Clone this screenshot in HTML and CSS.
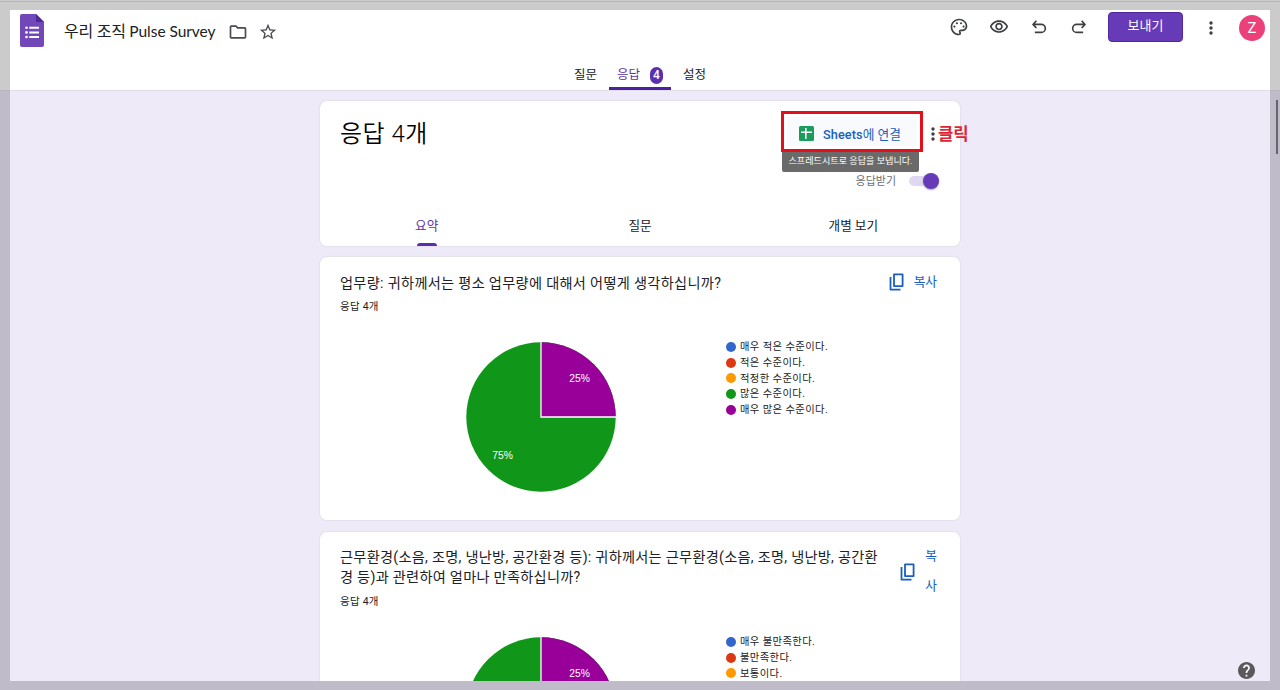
FILE: index.html
```html
<!DOCTYPE html>
<html lang="ko">
<head>
<meta charset="utf-8">
<title>우리 조직 Pulse Survey</title>
<link rel="stylesheet" href="styles.css">
</head>
<body>
<div class="frame">
<div class="app">
  <header class="topbar">
    <div class="toolbar">
      <svg class="logo" width="24" height="33" viewBox="0 0 24 33"><path d="M2 0h14l8 8v23a2 2 0 0 1-2 2H2a2 2 0 0 1-2-2V2a2 2 0 0 1 2-2z" fill="#7248b9"/><path d="M16 0l8 8h-8z" fill="#4d2a93"/><g fill="#fff"><circle cx="6.5" cy="13.8" r="1.3"/><circle cx="6.5" cy="18.4" r="1.3"/><circle cx="6.5" cy="23" r="1.3"/><path d="M9.3 12.8H19v2H9.3zM9.3 17.4H19v2H9.3zM9.3 22H19v2H9.3z"/></g></svg>
      <h1 class="doc-title">우리 조직 <span class="latin">Pulse Survey</span></h1>
      <svg class="folder" width="20" height="20" viewBox="0 0 24 24"><path fill="#484b4f" d="M9.17 6l2 2H20v10H4V6h5.17M10 4H4c-1.1 0-1.99.9-1.99 2L2 18c0 1.1.9 2 2 2h16c1.1 0 2-.9 2-2V8c0-1.1-.9-2-2-2h-8l-2-2z"/></svg>
      <svg class="star" width="18" height="18" viewBox="1 1 22 22"><path fill="#484b4f" d="M22 9.24l-7.19-.62L12 2 9.19 8.63 2 9.24l5.46 4.73L5.82 21 12 17.27 18.18 21l-1.63-7.03L22 9.24zM12 15.4l-3.76 2.27 1-4.28-3.32-2.88 4.38-.38L12 6.1l1.71 4.04 4.38.38-3.32 2.88 1 4.28L12 15.4z"/></svg>
      <div class="actions">
        <svg width="20" height="20" viewBox="0 0 24 24"><path fill="#3c4043" d="M12 22C6.49 22 2 17.51 2 12S6.49 2 12 2s10 4.04 10 9c0 3.31-2.69 6-6 6h-1.77c-.28 0-.5.22-.5.5 0 .12.05.23.13.33.41.47.64 1.06.64 1.67A2.5 2.5 0 0 1 12 22zm0-18c-4.41 0-8 3.59-8 8s3.59 8 8 8c.28 0 .5-.22.5-.5a.54.54 0 0 0-.14-.35c-.41-.46-.63-1.05-.63-1.65a2.5 2.5 0 0 1 2.5-2.5H16c2.21 0 4-1.79 4-4 0-3.86-3.59-7-8-7z"/><g fill="#3c4043"><circle cx="6.5" cy="11.5" r="1.3"/><circle cx="9.5" cy="7.5" r="1.3"/><circle cx="14.5" cy="7.5" r="1.3"/><circle cx="17.5" cy="11.5" r="1.3"/></g></svg>
        <svg width="20" height="20" viewBox="0 0 24 24"><path fill="#3c4043" d="M12 6c3.79 0 7.17 2.13 8.82 5.5C19.17 14.87 15.79 17 12 17s-7.17-2.13-8.82-5.5C4.83 8.13 8.21 6 12 6m0-2C7 4 2.73 7.11 1 11.5 2.73 15.89 7 19 12 19s9.27-3.11 11-7.5C21.27 7.11 17 4 12 4zm0 5a2.5 2.5 0 0 1 0 5 2.5 2.5 0 0 1 0-5m0-2c-2.48 0-4.5 2.02-4.5 4.5S9.52 16 12 16s4.5-2.02 4.5-4.5S14.48 7 12 7z"/></svg>
        <svg width="20" height="20" viewBox="0 0 24 24"><path fill="none" stroke="#3c4043" stroke-width="2" d="M8.8 4.5L4.9 8.9l3.9 4.3M5.3 8.9h9.5a4.8 4.8 0 0 1 0 9.6H7"/></svg>
        <svg width="20" height="20" viewBox="0 0 24 24"><path fill="none" stroke="#3c4043" stroke-width="2" d="M15.2 4.5l3.9 4.4-3.9 4.3M18.7 8.9H9.2a4.8 4.8 0 0 0 0 9.6H17"/></svg>
        <button class="send">보내기</button>
        <svg class="more" width="6" height="16" viewBox="0 0 6 16"><g fill="#3c4043"><circle cx="3" cy="3" r="1.7"/><circle cx="3" cy="8" r="1.7"/><circle cx="3" cy="13" r="1.7"/></g></svg>
        <div class="avatar">Z</div>
      </div>
    </div>
    <nav class="tabs">
      <div class="tab">질문</div>
      <div class="tab active">응답 <span class="count">4</span></div>
      <div class="tab">설정</div>
    </nav>
  </header>

  <main class="content">
    <section class="card summary">
      <div class="summary-head">
        <h2>응답 4개</h2>
        <div class="sheets">
          <div class="sheets-link"><svg width="15" height="15" viewBox="0 0 15 15"><rect width="15" height="15" rx="1.5" fill="#1a9c5b"/><path d="M6.8 2v11M2 6.3h11" stroke="#fff" stroke-width="1.6"/></svg><span><b>Sheets</b>에 연결</span></div>
          <div class="tooltip">스프레드시트로 응답을 보냅니다.</div>
        </div>
        <svg class="card-more" width="6" height="16" viewBox="0 0 6 16"><g fill="#3c4043"><circle cx="3" cy="3" r="1.7"/><circle cx="3" cy="8" r="1.7"/><circle cx="3" cy="13" r="1.7"/></g></svg>
        <div class="note">클릭</div>
      </div>
      <div class="accept"><span>응답받기</span><div class="switch"><i></i></div></div>
      <div class="views"><div class="view on">요약</div><div class="view">질문</div><div class="view">개별 보기</div></div>
    </section>

    <section class="card question">
      <div class="q-head">
        <div class="q-text"><h3>업무량: 귀하께서는 평소 업무량에 대해서 어떻게 생각하십니까?</h3><p>응답 4개</p></div>
        <div class="copy"><svg width="16" height="18" viewBox="0 0 16 18"><path fill="none" stroke="#1a5fc0" stroke-width="1.8" stroke-linejoin="round" d="M5 1.4h8.6v11.7H5zM1.5 4v12.6h10"/></svg><span>복사</span></div>
      </div>
      <div class="chart">
        <svg class="pie" width="150" height="150" viewBox="0 0 150 150"><circle cx="75" cy="75" r="74.7" fill="#109618"/><path d="M75 75V.3A74.7 74.7 0 0 1 149.7 75z" fill="#990099"/><path d="M75 0v75h75" fill="none" stroke="#fff" stroke-width="1.3"/><text x="113.5" y="39.5">25%</text><text x="36.5" y="116.5">75%</text></svg>
        <ul class="legend"><li class="c1">매우 적은 수준이다.</li><li class="c2">적은 수준이다.</li><li class="c3">적정한 수준이다.</li><li class="c4">많은 수준이다.</li><li class="c5">매우 많은 수준이다.</li></ul>
      </div>
    </section>

    <section class="card question second">
      <div class="q-head">
        <div class="q-text"><h3>근무환경(소음, 조명, 냉난방, 공간환경 등): 귀하께서는 근무환경(소음, 조명, 냉난방, 공간환<br>경 등)과 관련하여 얼마나 만족하십니까?</h3><p>응답 4개</p></div>
        <div class="copy tall"><svg width="16" height="18" viewBox="0 0 16 18"><path fill="none" stroke="#1a5fc0" stroke-width="1.8" stroke-linejoin="round" d="M5 1.4h8.6v11.7H5zM1.5 4v12.6h10"/></svg><span>복<br>사</span></div>
      </div>
      <div class="chart">
        <svg class="pie" width="150" height="150" viewBox="0 0 150 150"><circle cx="75" cy="75" r="74.7" fill="#109618"/><path d="M75 75V.3A74.7 74.7 0 0 1 149.7 75z" fill="#990099"/><path d="M75 0v75h75" fill="none" stroke="#fff" stroke-width="1.3"/><text x="113.5" y="39.5">25%</text></svg>
        <ul class="legend"><li class="c1">매우 불만족한다.</li><li class="c2">불만족한다.</li><li class="c3">보통이다.</li></ul>
      </div>
    </section>
  </main>
  <div class="help"><svg width="17" height="17" viewBox="2 2 20 20"><path fill="#5a5a5c" d="M12 2C6.48 2 2 6.48 2 12s4.48 10 10 10 10-4.48 10-10S17.52 2 12 2z"/><path fill="#fff" d="M13 19h-2v-2h2v2zm2.07-7.75l-.9.92C13.45 12.9 13 13.5 13 15h-2v-.5c0-1.1.45-2.1 1.17-2.83l1.24-1.26c.37-.36.59-.86.59-1.41 0-1.1-.9-2-2-2s-2 .9-2 2H8c0-2.21 1.79-4 4-4s4 1.79 4 4c0 .88-.36 1.68-.93 2.25z"/></svg></div>
</div>
<div class="scrollbar"></div>
</div>
</body>
</html>
```
FILE: styles.css
```css
* { box-sizing: border-box; }
body, h1, h2, h3, p, ul { margin: 0; padding: 0; font-weight: 400; }
body { font-family: Roboto, "Noto Sans CJK KR", sans-serif; color: #202124; overflow: hidden; }
svg { display: block; flex: none; }
.frame { position: relative; width: 1280px; height: 690px; padding: 10px 10px 9px; background: linear-gradient(#cbcbcb 0 1px, #b5b5b5 1px 2px, #cbcbcb 2px 90px, #b8b6bc 90px 91px, #bfbbc8 91px); }
.app { position: relative; height: 671px; overflow: hidden; background: #eeeaf7; }

.topbar { height: 81px; background: #fff; border-bottom: 1px solid #e0dde6; }
.toolbar { display: flex; height: 45px; padding-left: 10px; align-items: flex-start; }
.logo { margin-top: 4px; }
.doc-title { margin-left: 20px; padding-top: 9px; width: 155px; font-size: 16px; line-height: 24px; white-space: nowrap; letter-spacing: -.25px; }
.latin { font-family: Lato, sans-serif; font-size: 15.5px; letter-spacing: -.05px; }
.folder { margin: 12px 0 0 9px; }
.star { margin: 13px 0 0 11px; }
.actions { display: flex; align-items: center; gap: 20px; height: 34px; margin-left: auto; padding-right: 5px; }
.send { width: 75px; height: 30px; margin: 0 5px 0 -1px; border: 1px solid #53289f; border-radius: 4px; padding: 0 0 2px; background: #673ab7; color: #fff; font: 13px/20px Roboto, "Noto Sans CJK KR", sans-serif; }
.more { margin: 1px 6px 0 0; }
.avatar { width: 26px; height: 26px; margin: 1px 0 0 -1px; border-radius: 50%; background: #ec407a; color: #fff; font-size: 15px; line-height: 27px; text-align: center; }
.tabs { display: flex; justify-content: center; height: 35px; }
.tab { padding: 8px 12px 0; font-size: 12.5px; line-height: 24px; white-space: nowrap; height: 35px; }
.tab.active { display: flex; gap: 10px; width: 62px; padding: 8px 8px 0; color: #5b34a5; background: linear-gradient(#4d1fa3, #4d1fa3) 0 100% / 100% 3px no-repeat; border-radius: 3px 3px 0 0; }
.count { flex: none; width: 13px; height: 17px; margin-top: 4px; border-radius: 7px; background: #5b30ae; color: #fff; font-size: 12px; font-weight: 500; line-height: 17px; text-align: center; }

.content { width: 640px; margin: 10px auto 0; }
.card { background: #fff; border-radius: 7px; box-shadow: 0 0 1px 1px #e4e0ed; }
.summary { height: 145px; padding-top: 10px; }
.summary-head { position: relative; display: flex; align-items: flex-start; height: 59px; padding-left: 20px; }
.summary h2 { width: 441px; padding-top: 5px; font-size: 24px; line-height: 36px; font-weight: 350; letter-spacing: .5px; color: #000; }
.sheets { width: 142px; }
.sheets-link { display: flex; align-items: center; gap: 9px; height: 41px; padding: 4px 0 0 15px; border: 3px solid #e3101c; background: #f8fafe; box-shadow: inset 0 0 0 3px #fff; color: #1860bb; font-size: 12.7px; white-space: nowrap; }
.sheets-link b { font-weight: 500; letter-spacing: .1px; }
.tooltip { width: 137px; height: 20px; margin-left: 1px; background: #6a6a6a; color: #fff; border-radius: 0 0 2px 2px; font-size: 9.1px; line-height: 19px; text-align: center; white-space: nowrap; }
.card-more { margin: 15px 0 0 7px; }
.note { margin: 12px -20px 0 2px; color: #dc2436; font-size: 16.7px; font-weight: 700; line-height: 24px; white-space: nowrap; }
.accept { display: flex; justify-content: flex-end; align-items: center; gap: 13px; height: 22px; padding-right: 21px; color: #6b6e72; font-size: 11px; }
.accept span { margin-top: -2px; }
.switch { width: 30px; height: 10px; border-radius: 5px; background: #e0d8f1; display: flex; align-items: center; justify-content: flex-end; }
.switch i { width: 16px; height: 16px; border-radius: 50%; background: #673ab7; box-shadow: 0 1px 2px #aaa; }
.views { display: grid; grid-template-columns: repeat(3, 1fr); height: 54px; }
.view { padding-top: 22px; font-size: 12.6px; line-height: 24px; text-align: center; }
.view.on { color: #5b34a5; }
.view.on::after { content: ""; display: block; width: 20px; height: 3px; margin: 5px auto 0; border-radius: 3px 3px 0 0; background: #5a2fa5; }

.question { height: 263px; margin-top: 11px; }
.q-head { display: flex; padding: 16px 23px 0 20px; height: 85px; justify-content: space-between; }
.q-text h3 { font-size: 14.2px; line-height: 20px; letter-spacing: .31px; white-space: nowrap; }
.q-text p { margin-top: 6px; font-size: 10.5px; line-height: 16px; letter-spacing: .25px; }
.copy { display: flex; gap: 9px; height: 20px; margin-top: -1px; align-items: center; font-size: 12.7px; line-height: 20px; color: #1860bb; }
.copy span { margin-top: -1px; }
.copy.tall { gap: 9px; height: 50px; line-height: 30px; }
.copy.tall span { margin-top: -3px; }
.chart { display: flex; padding-left: 146px; }
.pie { font-family: "Liberation Sans", sans-serif; font-size: 10.3px; fill: #fff; text-anchor: middle; }
.legend { list-style: none; margin-left: 110px; padding-top: 1px; margin-top: -4px; font-size: 10.3px; line-height: 15.8px; letter-spacing: .4px; white-space: nowrap; }
.legend li { display: flex; align-items: center; gap: 4px; height: 15.8px; }
.legend li::before { content: ""; width: 10px; height: 10px; border-radius: 50%; background: currentColor; }
.legend .c1::before { background: #3366cc; }
.legend .c2::before { background: #dc3912; }
.legend .c3::before { background: #ff9900; }
.legend .c4::before { background: #109618; }
.legend .c5::before { background: #990099; }
.second { margin-top: 12px; }
.second .q-head { height: 105px; padding-top: 15px; }
.second .q-head h3 { letter-spacing: .27px; }
.second .q-head p { margin-top: 7px; }
.second .copy { margin-top: 0; }
.help { position: absolute; right: 15px; bottom: 2px; }
.scrollbar { position: absolute; right: 2px; top: 100px; width: 2px; height: 54px; background: #65636b; }
```
